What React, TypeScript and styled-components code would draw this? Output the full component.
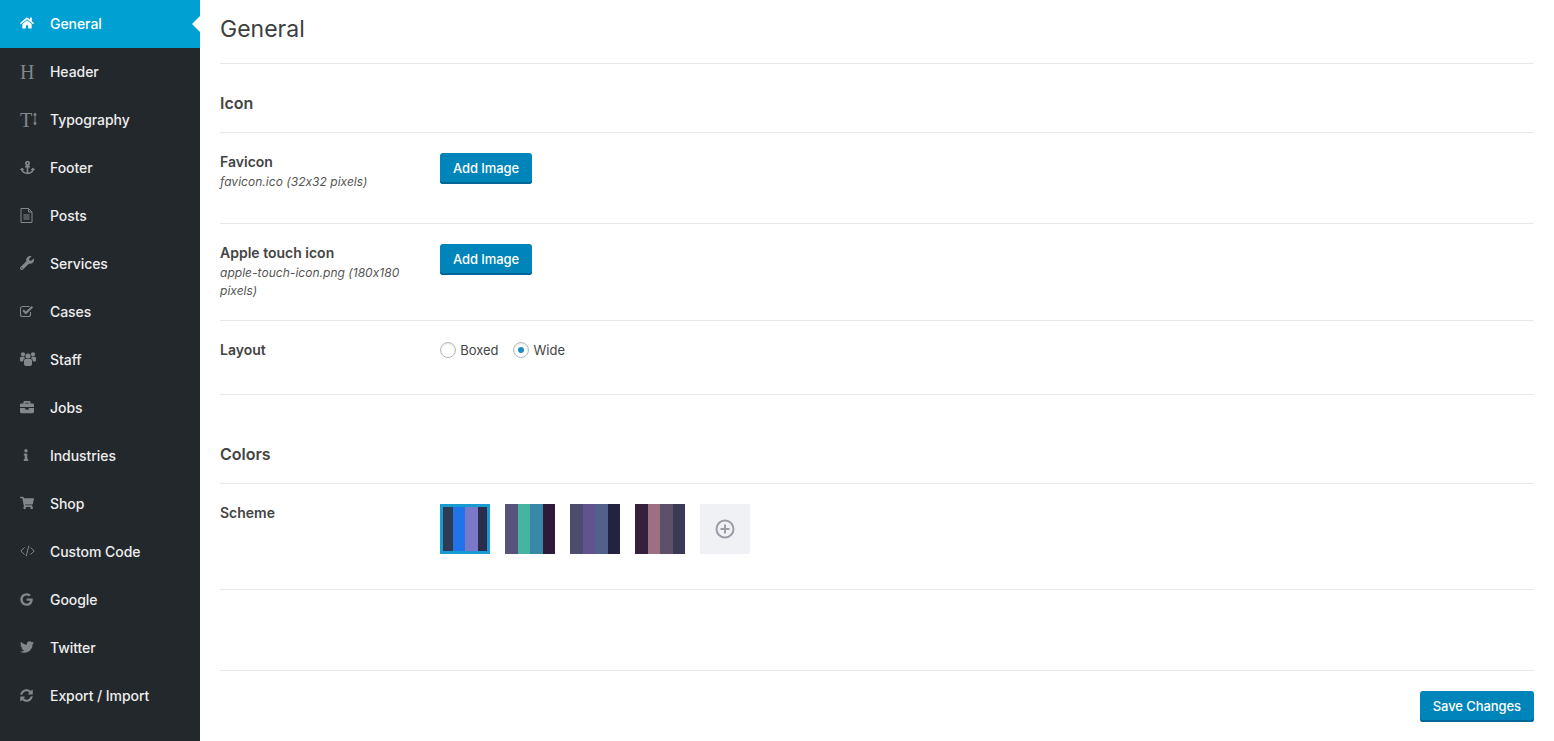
import React from "react";
import styled, { createGlobalStyle } from "styled-components";
import {
  FaHome, FaAnchor, FaWrench, FaBriefcase, FaInfo,
  FaShoppingCart, FaGoogle, FaTwitter, FaSyncAlt,
} from "react-icons/fa";

const Global = createGlobalStyle`
  html, body { margin: 0; padding: 0; height: 100%; overflow: hidden; background: #fff; }
  body { font-family: Inter, "Noto Sans", "Liberation Sans", sans-serif; color: #444; font-feature-settings: "calt" 0; -webkit-font-smoothing: antialiased; }
  * { box-sizing: border-box; }
`;

const Shell = styled.div`
  display: flex;
  width: 1554px;
  height: 741px;
`;
const Sidebar = styled.nav`
  width: 200px;
  flex: none;
  background: #23282d;
`;
const NavItem = styled.div<{ $active?: boolean }>`
  position: relative;
  display: flex;
  align-items: center;
  height: 48px;
  padding-left: 20px;
  padding-bottom: 2px;
  background: ${(p) => (p.$active ? "#00a0d2" : "transparent")};
  color: ${(p) => (p.$active ? "#fff" : "#eee")};
  font-size: 14px;
  font-weight: 500;
  letter-spacing: -0.06px;
  ${(p) =>
    p.$active &&
    `&::after {
      content: "";
      position: absolute;
      right: 0;
      top: 16px;
      border: 8px solid transparent;
      border-right-color: #fff;
      border-left: 0;
    }`}
`;
const IconSlot = styled.span<{ $active?: boolean }>`
  display: flex;
  align-items: center;
  width: 30px;
  flex: none;
  color: ${(p) => (p.$active ? "#fff" : "#82878c")};
  font-size: 14px;
`;
const SerifGlyph = styled.span`
  font-family: "Liberation Serif", serif;
  font-size: 20px;
  line-height: 1;
  font-weight: 400;
  color: #82878c;
  padding-top: 1px;
`;
const Main = styled.main`
  flex: 1;
  min-width: 0;
  padding: 0 20px;
`;
const PageTitle = styled.h1`
  margin: 0;
  height: 64px;
  padding-top: 13px;
  font-size: 23px;
  line-height: 32px;
  font-weight: 400;
  color: #3c4043;
  border-bottom: 1px solid #e8e8e8;
`;
const SectionHeading = styled.h2<{ $height: number }>`
  display: flex;
  align-items: flex-end;
  margin: 0;
  height: ${(p) => p.$height}px;
  padding-bottom: 19px;
  font-size: 16px;
  line-height: 20px;
  font-weight: 600;
  color: #444;
  border-bottom: 1px solid #e8e8e8;
`;
const Row = styled.section<{ $height: number }>`
  display: grid;
  grid-template-columns: 200px 1fr;
  column-gap: 20px;
  height: ${(p) => p.$height}px;
  padding-top: 19px;
  border-bottom: 1px solid #e8e8e8;
`;
const Label = styled.div`
  font-size: 14px;
  line-height: 20px;
  font-weight: 600;
  color: #444;
`;
const Hint = styled.div`
  margin-top: 1px;
  font-size: 12px;
  line-height: 18px;
  font-style: italic;
  font-weight: 400;
  color: #555;
  letter-spacing: 0.03px;
`;
const Button = styled.button`
  display: block;
  height: 31px;
  padding: 0 13px;
  margin-top: 1px;
  border: 0;
  border-radius: 3px;
  background: #0085ba;
  box-shadow: inset 0 -2px 0 #006799;
  color: #fff;
  font: 500 13px/29px Inter, sans-serif;
  font-feature-settings: "calt" 0;
  letter-spacing: -0.08px;
`;
const Radios = styled.div`
  display: flex;
  align-items: center;
  height: 20px;
  font-size: 13px;
  color: #444;
`;
const RadioOption = styled.label`
  display: flex;
  align-items: center;
  gap: 4.2px;
  margin-right: 14.8px;
`;
const RadioDot = styled.span<{ $on?: boolean }>`
  display: flex;
  align-items: center;
  justify-content: center;
  width: 16px;
  height: 16px;
  border-radius: 50%;
  border: 1px solid #b4b9be;
  background: #fff;
  box-shadow: inset 0 1px 2px rgba(0, 0, 0, 0.1);
  &::after {
    content: "";
    width: 6px;
    height: 6px;
    border-radius: 50%;
    background: ${(p) => (p.$on ? "#1e8cbe" : "transparent")};
  }
`;
const Swatches = styled.div`
  display: flex;
  gap: 15px;
  padding-top: 1px;
`;
const Swatch = styled.div<{ $selected?: boolean }>`
  display: flex;
  width: 50px;
  height: 50px;
  ${(p) => p.$selected && "outline: 3px solid #189bd1; outline-offset: -3px;"}
`;
const Stripe = styled.div<{ $c: string }>`
  flex: 1;
  background: ${(p) => p.$c};
`;
const AddSwatch = styled.div`
  display: flex;
  align-items: center;
  justify-content: center;
  width: 50px;
  height: 50px;
  background: #f0f1f5;
`;
const Footer = styled.div`
  display: flex;
  justify-content: flex-end;
  margin-top: 80px;
  padding-top: 20px;
  border-top: 1px solid #e8e8e8;
`;
const SaveButton = styled(Button)`
  margin-top: 0;
`;

const TextHeightIcon = () => (
  <>
    <SerifGlyph>T</SerifGlyph>
    <svg width="4" height="14" viewBox="0 0 4 14" style={{ marginLeft: 1 }}>
      <path d="M2 1v12" stroke="#82878c" strokeWidth="1" />
      <path d="M0 3.5L2 .5l2 3zM0 10.5L2 13.5l2-3z" fill="#82878c" />
    </svg>
  </>
);

const FileIcon = () => (
  <svg width="13" height="15" viewBox="0 0 13 15" fill="none" stroke="#82878c" strokeWidth="1">
    <path d="M1 .5h7.5l3.5 3.5v10.5H1z" />
    <path d="M8.5.5V4H12M3.5 7h6M3.5 9h6M3.5 11h6" />
  </svg>
);

const CheckSquareIcon = () => (
  <svg width="14" height="13" viewBox="0 0 14 13" fill="none" stroke="#82878c">
    <path d="M10.5 7v2.5a2 2 0 0 1-2 2h-6a2 2 0 0 1-2-2v-6a2 2 0 0 1 2-2h7" strokeWidth="1.1" />
    <path d="M3.2 5.2l2.6 2.8 6.6-6.2" strokeWidth="2" />
  </svg>
);

const UsersIcon = () => (
  <svg width="16" height="14" viewBox="0 0 16 14" fill="#82878c">
    <circle cx="8" cy="4" r="2.6" />
    <circle cx="3" cy="2.3" r="2.1" />
    <circle cx="13" cy="2.3" r="2.1" />
    <path d="M4 8.5Q4 7 5.5 7h5Q12 7 12 8.5V12Q12 14 10 14H6Q4 14 4 12z" />
    <path d="M0 6Q0 4.8 1.2 4.8h3.2Q4.3 6 5 6.6 3.2 6.8 3 9.5H1Q0 9.5 0 8.5zM16 6Q16 4.8 14.8 4.8h-3.2Q11.7 6 11 6.6 12.8 6.8 13 9.5h2Q16 9.5 16 8.5z" />
  </svg>
);

const CodeIcon = () => (
  <svg width="15" height="12" viewBox="0 0 15 12" fill="none" stroke="#82878c" strokeWidth="1">
    <path d="M4.5 2.5L.8 6l3.7 3.5M10.5 2.5L14.2 6l-3.7 3.5M8.8.8L6.2 11.2" />
  </svg>
);

const items: [string, React.ReactNode][] = [
  ["General", <FaHome key="a" size={14} />],
  ["Header", <SerifGlyph key="b">H</SerifGlyph>],
  ["Typography", <TextHeightIcon key="c" />],
  ["Footer", <FaAnchor key="d" size={15} />],
  ["Posts", <FileIcon key="e" />],
  ["Services", <FaWrench key="f" size={14} />],
  ["Cases", <CheckSquareIcon key="g" />],
  ["Staff", <UsersIcon key="h" />],
  ["Jobs", <FaBriefcase key="i" size={14} />],
  ["Industries", <FaInfo key="j" size={12} />],
  ["Shop", <FaShoppingCart key="k" size={14} />],
  ["Custom Code", <CodeIcon key="l" />],
  ["Google", <FaGoogle key="m" size={13} />],
  ["Twitter", <FaTwitter key="n" size={14} />],
  ["Export / Import", <FaSyncAlt key="o" size={13} />],
];

const schemes = [
  ["#2f3b52", "#1e74e8", "#7a78c8", "#2b2e4a"],
  ["#57527a", "#47b3a3", "#3a88a8", "#2e1a3a"],
  ["#4c4c6c", "#60538f", "#52608c", "#24233f"],
  ["#36213c", "#9c7080", "#5f5069", "#3a3a56"],
];

export default function App() {
  return (
    <Shell>
      <Global />
      <Sidebar>
        {items.map(([label, icon], i) => (
          <NavItem key={label} $active={i === 0}>
            <IconSlot $active={i === 0}>{icon}</IconSlot>
            {label}
          </NavItem>
        ))}
      </Sidebar>
      <Main>
        <PageTitle>General</PageTitle>
        <SectionHeading $height={69}>Icon</SectionHeading>
        <Row $height={91}>
          <div>
            <Label>Favicon</Label>
            <Hint>favicon.ico (32x32 pixels)</Hint>
          </div>
          <div><Button>Add Image</Button></div>
        </Row>
        <Row $height={97}>
          <div>
            <Label>Apple touch icon</Label>
            <Hint>apple-touch-icon.png (180x180 pixels)</Hint>
          </div>
          <div><Button>Add Image</Button></div>
        </Row>
        <Row $height={74}>
          <Label>Layout</Label>
          <Radios>
            <RadioOption><RadioDot />Boxed</RadioOption>
            <RadioOption><RadioDot $on />Wide</RadioOption>
          </Radios>
        </Row>
        <SectionHeading $height={89}>Colors</SectionHeading>
        <Row $height={106}>
          <Label>Scheme</Label>
          <Swatches>
            {schemes.map((s, i) => (
              <Swatch key={i} $selected={i === 0}>
                {s.map((c, j) => <Stripe key={j} $c={c} />)}
              </Swatch>
            ))}
            <AddSwatch>
              <svg width="20" height="20" viewBox="0 0 20 20" fill="none" stroke="#9a9ca6" strokeWidth="2">
                <circle cx="10" cy="10" r="8.5" />
                <path d="M10 5.5v9M5.5 10h9" />
              </svg>
            </AddSwatch>
          </Swatches>
        </Row>
        <Footer><SaveButton>Save Changes</SaveButton></Footer>
      </Main>
    </Shell>
  );
}
